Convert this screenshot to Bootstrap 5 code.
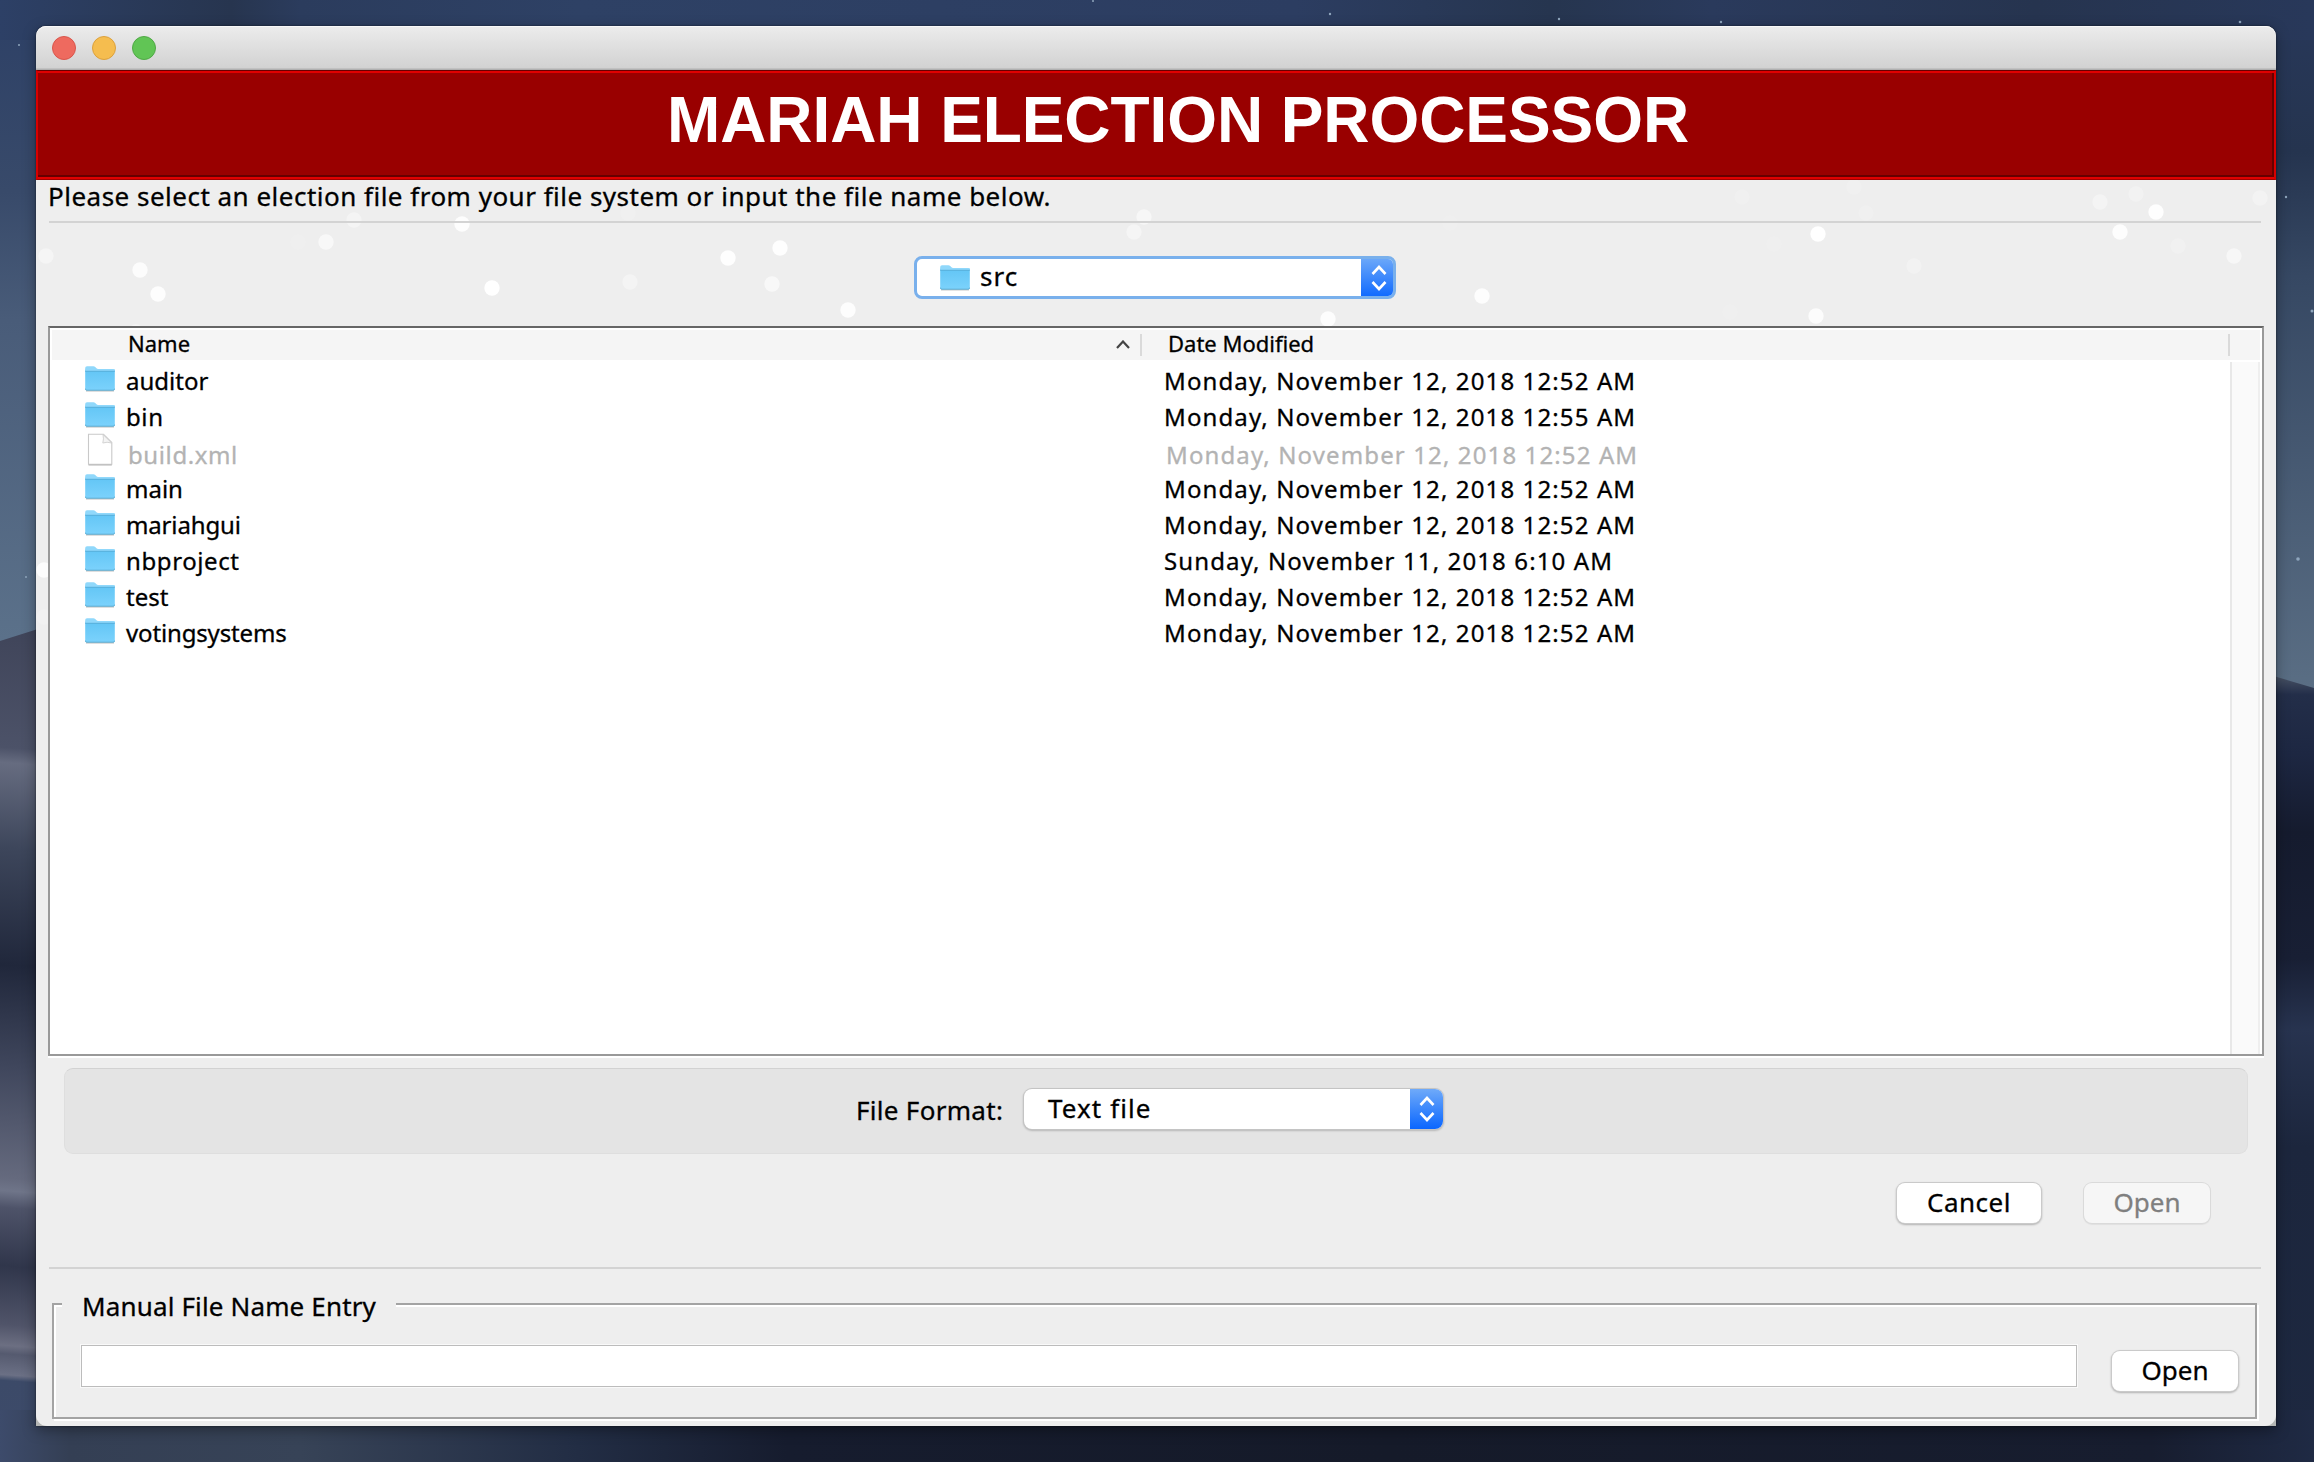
<!DOCTYPE html>
<html lang="en">
<head>
<meta charset="utf-8">
<title>Mariah Election Processor</title>
<link href="https://cdn.jsdelivr.net/npm/bootstrap@5.3.0/dist/css/bootstrap.min.css" rel="stylesheet">
<style>
body{width:2314px;height:1462px;overflow:hidden;padding:26px 38px 36px 36px;background:#1b2338;font-family:"Noto Sans","Open Sans",sans-serif;font-size:26px;color:#000;-webkit-text-stroke:.3px currentColor}
.wallpaper{left:0;top:0;z-index:-1}
.win{height:1400px;border-radius:10px 10px 0 0;background:#b4b6b4;box-shadow:0 0 2px rgba(0,0,0,.6),0 4px 14px rgba(0,0,0,.35)}
.titlebar{height:44px;padding-left:16px;gap:16px;border-radius:10px 10px 0 0;background:linear-gradient(#ececec,#d2d2d2 42px,#b0b0b0 43px);box-shadow:inset 0 1px 0 #f8f8f8}
.light{width:24px;height:24px;border-radius:50%}
.l-red{background:#ee6a5f;border:1px solid #d9564c}
.l-yellow{background:#f5bd4f;border:1px solid #dca13d}
.l-green{background:#61c555;border:1px solid #50a946}
.banner{height:110px;background:#900;border-top:1px solid #600;border-bottom:1px solid #a00000;border-right:2px solid #d80000;border-left:2px solid #d80000;box-shadow:inset 0 2px 0 #e00000,inset 0 -2px 0 #e00000,inset -2px -4px 0 #600;padding-left:44px}
.banner h1{font:bold 64px/98px "Liberation Sans",Arial,sans-serif;color:#fff;-webkit-text-stroke:0;letter-spacing:-.08px}
.client{height:1246px;background:#eee;border-radius:0 0 11px 11px}
.flakes{left:0;top:0}
.prompt{line-height:32px;height:41px;padding-left:12px;letter-spacing:.49px}
.rule{height:2px;background:#d3d3d3;margin:0 15px 0 13px}
.path-row{height:103px;padding:33px 0 0 878px}
.combo{background:#fff;border-radius:8px;overflow:hidden}
.combo .stepper{background:linear-gradient(#6faaf9,#0a66ff)}
.combo-path{width:482px;height:43px;border:3px solid #79b0ec}
.combo-path .pick{padding:0 0 3px 23px;gap:10px;letter-spacing:1px}
.combo-path .stepper{width:35px;margin:-2px -3px -3px 0}
.combo-format{width:419px;height:40px;box-shadow:0 0 0 1px #c4c4c4,0 1px 2px 1px rgba(0,0,0,.2)}
.combo-format .pick{padding:0 0 2px 24px;letter-spacing:1.1px}
.combo-format .stepper{width:33px}
.list-frame{width:2216px;height:730px;margin-left:12px;background:#fff;border:2px solid #999;border-top-color:#666;box-shadow:0 2px 0 #fff}
.list-head{height:30px;margin:2px 2px 0 2px;background:#f5f5f5;font-size:22px;line-height:27px}
.head-name{width:1088px;padding-left:76px}
.head-name svg{margin:10px 10px 0 0}
.head-sep{width:2px;height:22px;margin-top:4px;background:#dadada}
.head-date{width:1086px;padding-left:26px}
.rows{width:2180px;font-size:24px}
.item{height:36px;padding-left:35px}
.item .ico{width:30px;height:26px;margin:6px 10px 0 0}
.item .ico-doc{width:30px;height:33px;margin:1px 12px 0 0}
.item .fname{width:1039px;line-height:41px;padding-left:1px}
.item .fdate{line-height:41px;letter-spacing:1.12px}
.item.off{color:#b3b3b3}
.item.off .fname,.item.off .fdate{line-height:45px}
.tight{letter-spacing:-.15px}
.loose{letter-spacing:.6px}
.track{width:30px;margin:2px 2px 0 0;background:#fafafa;border-left:2px solid #e8e8e8;border-right:2px solid #efefef}
.format{height:86px;margin:12px 28px 0 28px;padding:20px 0 0 791px;border-radius:9px;background:#e4e4e4;border:1px solid #dedede;border-top-color:#d2d2d2}
.format label{width:168px;line-height:42px;letter-spacing:.3px}
.actions{height:113px;padding:29px 66px 0 0;gap:43px}
.mac-btn{height:40px;border-radius:8px;background:#fff;box-shadow:0 0 0 1px #cacaca,0 1px 2px 1px rgba(0,0,0,.25);border:0;padding:0 0 2px;font-size:26px;line-height:38px;color:#000}
.mac-btn:disabled{background:#f6f6f6;color:#7f7f7f;opacity:1;box-shadow:0 0 0 1px #dadada,0 1px 1px 1px rgba(0,0,0,.06)}
.w-cancel{width:144px;letter-spacing:.5px}
.w-open{width:126px}
.manual{width:2205px;height:116px;margin:34px 0 0 16px;border:2px solid #a3a3a3;box-shadow:2px 2px 0 #fff,inset 2px 2px 0 #fff}
.manual .caption{width:334px;height:32px;margin:-17px 0 0 8px;padding:2px 0 0 20px;line-height:32px;background:#eee;letter-spacing:.15px}
.entry{padding-left:27px;gap:35px}
.entry .form-control{width:1996px;height:42px;margin-top:25px;border:1px solid #bcbcbc;border-radius:0;box-shadow:0 0 0 1px #f9f9f9;padding:0 8px}
.entry .mac-btn{margin-top:31px}
</style>
<script src="https://cdn.jsdelivr.net/npm/bootstrap@5.3.0/dist/js/bootstrap.bundle.min.js"></script>
</head>
<body>
<svg class="wallpaper position-absolute" width="2314" height="1462" viewBox="0 0 2314 1462" aria-hidden="true">
<defs>
<linearGradient id="skyL" x1="0" y1="0" x2="0" y2="640" gradientUnits="userSpaceOnUse"><stop offset="0" stop-color="#2d4066"/><stop offset=".3" stop-color="#384a6a"/><stop offset=".5" stop-color="#495c79"/><stop offset="1" stop-color="#5b718a"/></linearGradient>
<linearGradient id="duneL" x1="0" y1="630" x2="-60" y2="1462" gradientUnits="userSpaceOnUse"><stop offset="0" stop-color="#40455a"/><stop offset=".14" stop-color="#4c5268"/><stop offset=".158" stop-color="#666c80"/><stop offset=".26" stop-color="#3d465b"/><stop offset=".4" stop-color="#20273b"/><stop offset=".52" stop-color="#3f465c"/><stop offset=".655" stop-color="#656a7e"/><stop offset=".67" stop-color="#6f7589"/><stop offset=".69" stop-color="#4e5369"/><stop offset=".76" stop-color="#30364b"/><stop offset=".83" stop-color="#505469"/><stop offset=".855" stop-color="#6c6f82"/><stop offset=".865" stop-color="#555a6f"/><stop offset=".89" stop-color="#6b7085"/><stop offset=".897" stop-color="#3c4a68"/><stop offset="1" stop-color="#3d4b6b"/></linearGradient>
<linearGradient id="skyR" x1="0" y1="0" x2="0" y2="690" gradientUnits="userSpaceOnUse"><stop offset="0" stop-color="#28385a"/><stop offset=".22" stop-color="#25344f"/><stop offset=".4" stop-color="#364863"/><stop offset="1" stop-color="#5a6e84"/></linearGradient>
<linearGradient id="duneR" x1="0" y1="675" x2="0" y2="1462" gradientUnits="userSpaceOnUse"><stop offset="0" stop-color="#4a5466"/><stop offset=".025" stop-color="#232e49"/><stop offset=".1" stop-color="#1d2742"/><stop offset=".2" stop-color="#151b2e"/><stop offset=".36" stop-color="#181f34"/><stop offset=".45" stop-color="#27334f"/><stop offset=".6" stop-color="#1c263d"/><stop offset="1" stop-color="#1d2840"/></linearGradient>
<linearGradient id="top"><stop offset="0" stop-color="#2d4066"/><stop offset=".1" stop-color="#27354f"/><stop offset=".13" stop-color="#2b3c5d"/><stop offset=".25" stop-color="#2e4165"/><stop offset=".56" stop-color="#2c3d61"/><stop offset=".67" stop-color="#26354f"/><stop offset=".74" stop-color="#2a3a5c"/><stop offset=".88" stop-color="#26344f"/><stop offset="1" stop-color="#28385a"/></linearGradient>
<linearGradient id="bottom"><stop offset="0" stop-color="#3d4b6b"/><stop offset=".03" stop-color="#343f54"/><stop offset=".13" stop-color="#374357"/><stop offset=".25" stop-color="#222d44"/><stop offset=".34" stop-color="#161c2e"/><stop offset=".6" stop-color="#151a29"/><stop offset=".93" stop-color="#171d2f"/><stop offset="1" stop-color="#1f2a44"/></linearGradient>
</defs>
<rect width="60" height="700" fill="url(#skyL)"/>
<path d="M0 641L60 622V1462H0Z" fill="url(#duneL)"/>
<rect x="2250" width="64" height="700" fill="url(#skyR)"/>
<path d="M2250 669L2314 688V1462H2250Z" fill="url(#duneR)"/>
<rect width="2314" height="40" fill="url(#top)"/>
<rect y="1410" width="2314" height="52" fill="url(#bottom)"/>
<g fill="#8fa6bd"><circle cx="1330" cy="14" r="1.2"/><circle cx="1559" cy="19" r="1.2"/><circle cx="1721" cy="22" r="1.2"/><circle cx="2240" cy="22" r="1.3"/><circle cx="1093" cy="1" r="1"/><circle cx="19" cy="45" r="1"/><circle cx="2286" cy="197" r="1.2"/><circle cx="2298" cy="559" r="1.8"/><circle cx="2312" cy="311" r="1.5"/><circle cx="26" cy="577" r="1"/></g>
</svg>
<svg width="0" height="0" class="position-absolute" aria-hidden="true">
<defs><linearGradient id="folderFill" x1="0" y1="0" x2="0" y2="1"><stop offset="0" stop-color="#62c5f5"/><stop offset="1" stop-color="#7bd2fc"/></linearGradient></defs>
<symbol id="folder" viewBox="0 0 30 26"><path d="M1 24.8h28" stroke="#000" stroke-opacity=".22" stroke-width="1.6"/><path d="M.2 3.500h29.600V22.800q0 1.500-1.500 1.500H1.700Q.2 24.300.2 22.800Z" fill="url(#folderFill)"/><path d="M.2 5V2Q.2.2 2 .2h6.500q1 0 1.700.8l1.300 1.300q.6.600 1.600.600H28q1.800 0 1.800 1.700V5Z" fill="#90d8fb"/><path d="M.2 5.300h29.600" stroke="#58afdb" stroke-width="1"/><path d="M.4 22.600Q.4 24.200 1.700 24.200H28.300Q29.600 24.200 29.600 22.600" fill="none" stroke="#57a9d0" stroke-width=".9"/></symbol>
<symbol id="doc" viewBox="0 0 30 33"><path d="M3.500 1.300H18.500L26.800 9.600V31.300H3.500Z" fill="#fff" stroke="#c9c9c9" stroke-width="1.100"/><path d="M18 1.500Q19 6 17.800 10Q22 8.500 26.600 10L18 1.500Z" fill="#f4f4f4" stroke="#cfcfcf" stroke-width=".9"/><path d="M3.500 32H26.800" stroke="#aaa" stroke-width=".9"/></symbol>
<symbol id="updown" viewBox="0 0 16 26"><path d="M1.500 9L8 2l6.500 7M1.500 17L8 24l6.500-7" fill="none" stroke="#fff" stroke-width="2.600"/></symbol>
</svg>

<main class="win">
  <div class="titlebar d-flex align-items-center">
    <span class="light l-red"></span><span class="light l-yellow"></span><span class="light l-green"></span>
  </div>
  <header class="banner text-center"><h1 class="m-0">MARIAH ELECTION PROCESSOR</h1></header>
  <div class="client position-relative">
    <svg class="flakes position-absolute" width="2240" height="1246" viewBox="36 180 2240 1246" fill="#fff" aria-hidden="true">
      <circle cx="354" cy="220" r="7.700" opacity=".35"/><circle cx="462" cy="224" r="7.700" opacity=".85"/><circle cx="298" cy="242" r="7.700" opacity=".1"/><circle cx="326" cy="242" r="7.700" opacity=".6"/><circle cx="46" cy="256" r="7.700" opacity=".4"/><circle cx="140" cy="270" r="7.700" opacity=".8"/><circle cx="158" cy="294" r="7.700" opacity=".85"/><circle cx="492" cy="288" r="7.700"/><circle cx="630" cy="282" r="7.700" opacity=".35"/><circle cx="728" cy="258" r="7.700" opacity=".9"/><circle cx="628" cy="213" r="7.700" opacity=".15"/><circle cx="136" cy="332" r="7.700" opacity=".4"/>
      <circle cx="780" cy="248" r="7.700" opacity=".9"/><circle cx="772" cy="284" r="7.700" opacity=".6"/><circle cx="848" cy="310" r="7.700" opacity=".85"/><circle cx="1144" cy="217" r="7.700" opacity=".5"/><circle cx="1134" cy="232" r="7.700" opacity=".4"/><circle cx="1328" cy="319" r="7.700" opacity=".85"/>
      <circle cx="1742" cy="197" r="7.700" opacity=".12"/><circle cx="1854" cy="187" r="7.700" opacity=".15"/><circle cx="1866" cy="213" r="7.700" opacity=".12"/><circle cx="2100" cy="202" r="7.700" opacity=".35"/><circle cx="2136" cy="194" r="7.700" opacity=".25"/><circle cx="2156" cy="212" r="7.700" opacity=".9"/><circle cx="2260" cy="198" r="7.700" opacity=".3"/><circle cx="1450" cy="223" r="7.700" opacity=".1"/><circle cx="1818" cy="234" r="7.700" opacity=".95"/><circle cx="1774" cy="244" r="7.700" opacity=".1"/><circle cx="2120" cy="232" r="7.700" opacity=".85"/><circle cx="2178" cy="246" r="7.700" opacity=".2"/><circle cx="2234" cy="256" r="7.700" opacity=".5"/><circle cx="1914" cy="266" r="7.700" opacity=".25"/><circle cx="1473" cy="277" r="7.700" opacity=".05"/><circle cx="1482" cy="296" r="7.700" opacity=".85"/><circle cx="1730" cy="312" r="7.700" opacity=".1"/><circle cx="1816" cy="316" r="7.700" opacity=".8"/>
      <circle cx="44" cy="570" r="7.700" opacity=".8"/><circle cx="44" cy="617" r="7.700" opacity=".2"/>
    </svg>
    <div class="position-relative">
      <div class="prompt">Please select an election file from your file system or input the file name below.</div>
      <div class="rule"></div>
      <div class="path-row">
        <div class="combo combo-path d-flex">
          <div class="pick d-flex align-items-center flex-grow-1"><svg width="30" height="26" class="mt-1"><use href="#folder"/></svg><span>src</span></div>
          <div class="stepper d-flex align-items-center justify-content-center"><svg width="16" height="26"><use href="#updown"/></svg></div>
        </div>
      </div>
      <section class="list-frame">
        <div class="list-head d-flex">
          <div class="head-name d-flex justify-content-between"><span>Name</span><svg width="14" height="9" viewBox="0 0 14 9"><path d="M1 8L7 1.500 13 8" fill="none" stroke="#444" stroke-width="2.200"/></svg></div>
          <div class="head-sep"></div>
          <div class="head-date">Date Modified</div>
          <div class="head-sep"></div>
        </div>
        <div class="d-flex justify-content-between h-100" style="max-height:694px">
          <div class="rows">
            <div class="item d-flex"><svg class="ico"><use href="#folder"/></svg><div class="fname">auditor</div><div class="fdate">Monday, November 12, 2018 12:52 AM</div></div>
            <div class="item d-flex"><svg class="ico"><use href="#folder"/></svg><div class="fname loose">bin</div><div class="fdate">Monday, November 12, 2018 12:55 AM</div></div>
            <div class="item off d-flex"><svg class="ico-doc"><use href="#doc"/></svg><div class="fname loose">build.xml</div><div class="fdate">Monday, November 12, 2018 12:52 AM</div></div>
            <div class="item d-flex"><svg class="ico"><use href="#folder"/></svg><div class="fname">main</div><div class="fdate">Monday, November 12, 2018 12:52 AM</div></div>
            <div class="item d-flex"><svg class="ico"><use href="#folder"/></svg><div class="fname tight">mariahgui</div><div class="fdate">Monday, November 12, 2018 12:52 AM</div></div>
            <div class="item d-flex"><svg class="ico"><use href="#folder"/></svg><div class="fname loose">nbproject</div><div class="fdate">Sunday, November 11, 2018 6:10 AM</div></div>
            <div class="item d-flex"><svg class="ico"><use href="#folder"/></svg><div class="fname">test</div><div class="fdate">Monday, November 12, 2018 12:52 AM</div></div>
            <div class="item d-flex"><svg class="ico"><use href="#folder"/></svg><div class="fname tight">votingsystems</div><div class="fdate">Monday, November 12, 2018 12:52 AM</div></div>
          </div>
          <div class="track"></div>
        </div>
      </section>
      <section class="format d-flex">
        <label>File Format:</label>
        <div class="combo combo-format d-flex">
          <div class="pick d-flex align-items-center flex-grow-1">Text file</div>
          <div class="stepper d-flex align-items-center justify-content-center"><svg width="16" height="26"><use href="#updown"/></svg></div>
        </div>
      </section>
      <div class="actions d-flex justify-content-end">
        <button type="button" class="btn mac-btn w-cancel">Cancel</button>
        <button type="button" class="btn mac-btn w-open" disabled>Open</button>
      </div>
      <div class="rule"></div>
      <section class="manual">
        <div class="caption">Manual File Name Entry</div>
        <div class="entry d-flex">
          <input type="text" class="form-control" aria-label="Manual File Name Entry">
          <button type="button" class="btn mac-btn w-open">Open</button>
        </div>
      </section>
    </div>
  </div>
</main>
</body>
</html>
